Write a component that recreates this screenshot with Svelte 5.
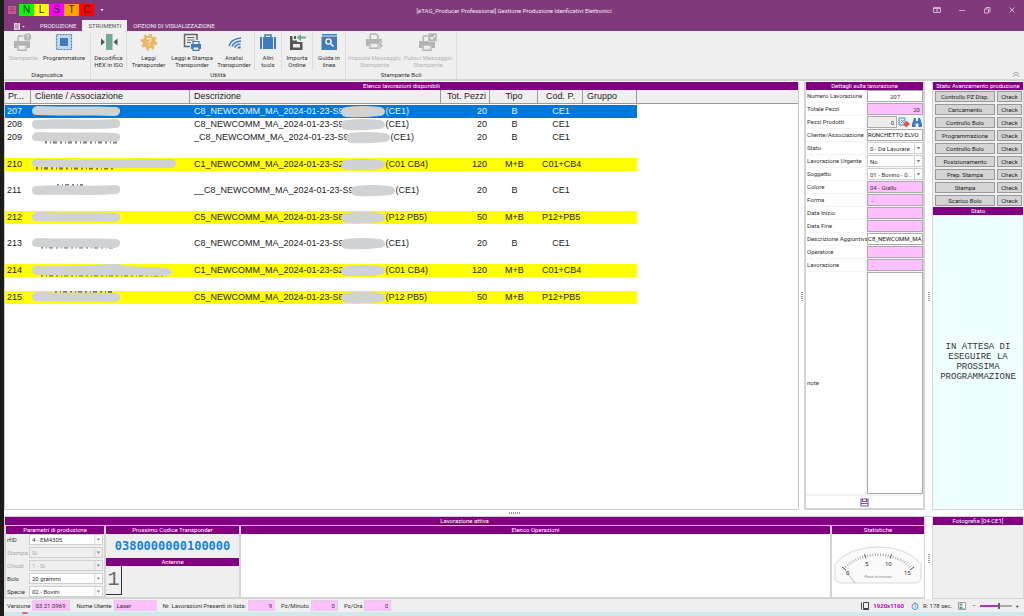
<script>
  const letters = ['N', 'L', 'S', 'T', 'C'];
  const groups = [
    { name: 'Diagnostica', cls: 'diag', items: [
      { icon: 'printer-help', lines: ['Stampante'], off: true },
      { icon: 'chip', lines: ['Programmatore'] }
    ] },
    { name: 'Utilità', cls: 'util', items: [
      { icon: 'decode', lines: ['Decodifica', 'HEX in ISO'], sep: true },
      { icon: 'gear', lines: ['Leggi', 'Transponder'] },
      { icon: 'doc-print', lines: ['Leggi e Stampa', 'Transponder'] },
      { icon: 'signal', lines: ['Analisi', 'Transponder'], sep: true },
      { icon: 'case', lines: ['Altri', 'tools'], sep: true },
      { icon: 'import', lines: ['Importa', 'Ordine'], sep: true },
      { icon: 'guide', lines: ['Guida in', 'linea'] }
    ] },
    { name: 'Stampante Boli', cls: 'boli', items: [
      { icon: 'printer-bolt', lines: ['Imposta Messaggio', 'Stampante'], off: true },
      { icon: 'printer-check', lines: ['Pulisci Messaggio', 'Stampante'], off: true }
    ] }
  ];
  const short = 'M6 2 C30 0 60 3 85 1 Q90 2 89 6 Q89 10 84 10 C60 12 30 10 6 11 Q1 11 1 6 Q1 2 6 2Z';
  const flat = 'M6 1 C30 2 60 1 85 2 Q90 3 89 7 Q88 11 83 11 C60 10 30 11 6 10 Q1 10 1 6 Q1 2 6 1Z';
  const long = 'M6 1 C50 2 90 2 140 1 Q145 1 145 6 Q145 10 139 10 C90 10 50 10 6 9 Q1 9 1 5 Q1 1 6 1Z';
  const hump = 'M6 2 C40 3 70 0 88 0 C98 4 120 2 136 4 Q141 5 141 8 Q140 12 135 12 C90 11 50 12 6 11 Q1 10 1 6 Q1 2 6 2Z';
  const rows = [
    { n: 207, blob: flat, d: 'C8_NEWCOMM_MA_2024-01-23-S9_', s: '(CE1)', q: 20, t: 'B', c: 'CE1', kind: 'sel' },
    { n: 208, blob: short, d: 'C8_NEWCOMM_MA_2024-01-23-S9_', s: '(CE1)', q: 20, t: 'B', c: 'CE1' },
    { n: 209, blob: flat, rest: 'M14 11 H86', d: '_C8_NEWCOMM_MA_2024-01-23-S9_', s: '(CE1)', q: 20, t: 'B', c: 'CE1' },
    { gap: 'tall' },
    { n: 210, blob: long, rest: 'M5 10 H83', d: 'C1_NEWCOMM_MA_2024-01-23-S2_', s: '(C01 CB4)', q: 120, t: 'M+B', c: 'C01+CB4', kind: 'hot' },
    { gap: 'low' },
    { n: 211, blob: short, rest: 'M26 1 H52', d: '__C8_NEWCOMM_MA_2024-01-23-S9_', s: '(CE1)', q: 20, t: 'B', c: 'CE1' },
    { gap: 'tall' },
    { n: 212, blob: flat, d: 'C5_NEWCOMM_MA_2024-01-23-S6_', s: '(P12 PB5)', q: 50, t: 'M+B', c: 'P12+PB5', kind: 'hot' },
    { gap: 'low' },
    { n: 213, blob: flat, rest: 'M10 10 H84', d: 'C8_NEWCOMM_MA_2024-01-23-S9_', s: '(CE1)', q: 20, t: 'B', c: 'CE1' },
    { gap: 'tall' },
    { n: 214, blob: hump, rest: 'M10 11 H134', d: 'C1_NEWCOMM_MA_2024-01-23-S2_', s: '(C01 CB4)', q: 120, t: 'M+B', c: 'C01+CB4', kind: 'hot' },
    { gap: 'tall' },
    { n: 215, blob: flat, rest: 'M24 1.500 H84', d: 'C5_NEWCOMM_MA_2024-01-23-S6_', s: '(P12 PB5)', q: 50, t: 'M+B', c: 'P12+PB5', kind: 'hot' }
  ];
  const details = [
    { id: 'num', l: 'Numero Lavorazione', v: '207', cls: 'mid' },
    { id: 'tot', l: 'Totale Pezzi', v: '20', cls: 'pink right' },
    { id: 'prod', l: 'Pezzi Prodotti', v: '0', cls: 'grey right', tools: true },
    { id: 'cli', l: 'Cliente/Associazione', v: 'RONCHETTO ELVO', cls: 'dark' },
    { id: 'stato', l: 'Stato', v: '0 - Da Lavorare', sel: true },
    { id: 'urg', l: 'Lavorazione Urgente', v: 'No', sel: true },
    { id: 'sog', l: 'Soggetto', v: '01 - Bovino - 0...', sel: true },
    { id: 'col', l: 'Colore', v: '04 - Giallo', cls: 'pink' },
    { id: 'forma', l: 'Forma', v: ' -', cls: 'pink' },
    { id: 'ini', l: 'Data Inizio', v: '', cls: 'pink' },
    { id: 'fine', l: 'Data Fine', v: '', cls: 'pink' },
    { id: 'agg', l: 'Descrizione Aggiuntiva', v: 'C8_NEWCOMM_MA_2024', cls: 'dark' },
    { id: 'op', l: 'Operatore', v: '', cls: 'pink' },
    { id: 'lav', l: 'Lavorazione', v: ' -', cls: 'pink' }
  ];
  const steps = ['Controllo PZ Disp.', 'Caricamento', 'Controllo Bolo', 'Programmazione', 'Controllo Bolo', 'Posizionamento', 'Prep. Stampa', 'Stampa', 'Scarico Bolo'];
  const params = [
    { id: 'rfid', l: 'rfID', v: '4 - EM4305' },
    { id: 'stampa', l: 'Stampa', v: 'Sì', off: true },
    { id: 'chiudi', l: 'Chiudi', v: '1 - Sì', off: true },
    { id: 'bolo', l: 'Bolo', v: '20 grammi' },
    { id: 'specie', l: 'Specie', v: '02 - Bovini' }
  ];
  const ticks = Array.from({ length: 31 }, (_, i) => {
    const a = ((-50 + (i * 100) / 30) * Math.PI) / 180;
    const major = i % 10 === 0;
    const r1 = major ? 42 : 43;
    const r2 = major ? 47 : 46;
    return { x1: 45 + r1 * Math.sin(a), y1: 51 - r1 * Math.cos(a) * 0.86, x2: 45 + r2 * Math.sin(a), y2: 51 - r2 * Math.cos(a) * 0.86, major };
  });
</script>

{#snippet printer()}
  <path d="M4 1h6l2 2v4" fill="none" stroke="currentColor" stroke-width="1.5" />
  <path d="M4.2 7V1.5" stroke="currentColor" stroke-width="1.5" />
  <path d="M0 6h16v7h-3v-3H3v3H0z" fill="currentColor" />
  <rect x="4" y="10" width="8" height="5.2" fill="#efefef" stroke="currentColor" stroke-width="1.5" />
{/snippet}

{#snippet icon(name)}
  <svg class="ico" viewBox="0 0 18 18" aria-hidden="true">
    {#if name === 'printer-help'}
      <g transform="translate(0 2)">{@render printer()}</g>
      <circle cx="13.5" cy="4" r="4.4" fill="#efefef" /><circle cx="13.5" cy="4" r="3.7" fill="currentColor" />
      <path d="M12.3 3.3q0-1.3 1.2-1.3t1.2 1.1q0 .7-1.1 1.3v.6M13.6 5.7v.7" fill="none" stroke="#efefef" stroke-width=".9" />
    {:else if name === 'chip'}
      <rect x="1.500" y="1.500" width="15" height="15" fill="#c5d8ec" stroke="#4a80b8" stroke-width="1.200" stroke-dasharray="2 1" />
      <rect x="5" y="5" width="8" height="8" fill="#3f7cbc" />
    {:else if name === 'decode'}
      <rect x="6" y="1" width="6.5" height="16" fill="#6fa894" />
      <path d="M1 5.5l4 3.5-4 3.5zM17.5 5.5l-4 3.5 4 3.5z" fill="#555" />
    {:else if name === 'gear'}
      <circle cx="9" cy="9" r="5" fill="none" stroke="#e9b765" stroke-width="3" />
      <circle cx="9" cy="9" r="7" fill="none" stroke="#e9b765" stroke-width="2.6" stroke-dasharray="2.7 2.8" />
      <circle cx="9" cy="9" r="4" fill="#e9b765" /><path d="M7.5 7q0-1.8 1.6-1.8T10.8 7q0 1-1.6 2.2v1M9.2 11.3v1.2" fill="none" stroke="#fff6e6" stroke-width="1.1" />
    {:else if name === 'doc-print'}
      <path d="M14 7V1.5H1.5v12H7" fill="none" stroke="#666" stroke-width="1.5" />
      <path d="M4 4.5h7.5M4 7h7.5M4 9.500h4" stroke="#666" stroke-width="1.2" />
      <path d="M8 11h10v5H8z" fill="#3f7cbc" /><path d="M10 11V8.500h6V11M10 14h6v3.300h-6z" fill="#efefef" stroke="#3f7cbc" stroke-width="1.2" />
    {:else if name === 'signal'}
      <path d="M4 13Q6 6 16 5M7 13.500Q8.500 9 16 8M9.500 14.500Q11 11.500 15.500 11" fill="none" stroke="#3f7cbc" stroke-width="1.600" /><path d="M12 15.500q1-2.500 3.500-2.500v2.500z" fill="#3f7cbc" />
    {:else if name === 'case'}
      <path d="M6 4V2h6v2" fill="none" stroke="#3f7cbc" stroke-width="1.500" />
      <path d="M1 4h2v12H1zM4 4h10v12H4zM15 4h2v12h-2z" fill="#3f7cbc" />
    {:else if name === 'import'}
      <path d="M2 3h2.500v4.500H9V9h5.500v8H2z" fill="#555" /><rect x="5" y="11" width="7" height="3.500" fill="#efefef" /><path d="M6 3v3h2V3z" fill="#555" />
      <path d="M18 4.500h-6" stroke="#6fa894" stroke-width="2" /><path d="M8.500 4.500l4.500-3.500v7z" fill="#6fa894" />
    {:else if name === 'guide'}
      <path d="M2 1h15v1.500H2zM1.500 3.500H17V17H1.500z" fill="#3f7cbc" />
      <circle cx="8.500" cy="8.500" r="2.600" fill="none" stroke="#fff" stroke-width="1.300" /><path d="M10.500 10.500l3 3" stroke="#fff" stroke-width="1.500" />
    {:else if name === 'printer-bolt'}
      {@render printer()}
      <path d="M15 8l-4 5h3l-2 5 6-6h-3l2-4z" fill="currentColor" stroke="#efefef" stroke-width=".6" />
    {:else if name === 'printer-check'}
      <g transform="translate(0 2)">{@render printer()}</g>
      <rect x="9" y="0" width="9" height="8.500" fill="currentColor" stroke="#efefef" stroke-width=".6" /><path d="M11 4l2 2 3.500-4" fill="none" stroke="#efefef" stroke-width="1.200" />
    {/if}
  </svg>
{/snippet}

{#snippet drop(id, value, off)}
  <span class="drop" class:off>
    <select {id} disabled={off}><option>{value}</option></select>
    <svg viewBox="0 0 8 10" aria-hidden="true"><path d="M.5 0v10" stroke="#cfcfcf" /><path d="M2.500 4h4L4.500 6.500z" fill="#888" /></svg>
  </span>
{/snippet}

<div class="screen">
  <div class="window">
    <header class="titlebar">
      <div class="quick">
        <svg class="logo" viewBox="0 0 8 8" aria-hidden="true"><path d="M0 0h8v8H0z" fill="#c5588f" /><path d="M1 4.500h6M2 2h4" stroke="#8d3a7c" stroke-width="1.200" /></svg>
        <div class="letters">{#each letters as l}<button class="lt {l}">{l}</button>{/each}</div>
        <svg class="more" viewBox="0 0 4 4" aria-hidden="true"><path d="M.5 1h3L2 3.500z" fill="#f2e6f1" /></svg>
      </div>
      <h1>[eTAG_Producer Professional] Gestione Produzione Idenficativi Elettronici</h1>
      <div class="winbtns">
        <button aria-label="Barra multifunzione"><svg viewBox="0 0 8 8"><path d="M.5 1.500h7v5h-7zM.5 2.500h7M4 6V3.500M3 4.500l1-1 1 1" /></svg></button>
        <button aria-label="Riduci"><svg viewBox="0 0 8 8"><path d="M1 4.500h6" /></svg></button>
        <button aria-label="Ripristina"><svg viewBox="0 0 8 8"><path d="M1.500 3h4v4h-4zM3 3V1.500h4v4H5.500" /></svg></button>
        <button aria-label="Chiudi finestra"><svg viewBox="0 0 8 8"><path d="M1.500 1.500l5 5M6.500 1.500l-5 5" /></svg></button>
      </div>
    </header>

    <nav class="tabs">
      <button class="file" aria-label="File"><svg viewBox="0 0 12 8"><path d="M0 0h6v7H0z" fill="#e6d6e5" /><path d="M1 2h2M1 3.500h2M1 5h2M4 0v7" stroke="#80397b" stroke-width=".6" /><path d="M8 3h3L9.500 4.500z" fill="#e6d6e5" /></svg></button>
      <button>PRODUZIONE</button>
      <button class="active">STRUMENTI</button>
      <button>OPZIONI DI VISUALIZZAZIONE</button>
    </nav>

    <section class="ribbon">
      {#each groups as g}
        <div class="group">
          <div class="items {g.cls}">
            {#each g.items as it}
              <button class="tool" class:sep={it.sep} disabled={it.off}>
                {@render icon(it.icon)}
                {#each it.lines as line}<span>{line}</span>{/each}
              </button>
            {/each}
          </div>
          <div class="gname">{g.name}</div>
        </div>
      {/each}
      <button class="collapse" aria-label="Comprimi"><svg viewBox="0 0 8 6"><path d="M1 3l3-2 3 2M1 5.500l3-2 3 2" fill="none" stroke="#888" stroke-width=".8" /></svg></button>
    </section>

    <main>
      <section class="list">
        <h2>Elenco lavorazioni disponibili</h2>
        <table>
          <colgroup><col class="c1" /><col class="c2" /><col class="c3" /><col class="c4" /><col class="c5" /><col class="c6" /><col class="c7" /><col /></colgroup>
          <thead>
            <tr><th>Pr...</th><th>Cliente / Associazione</th><th>Descrizione</th><th class="r">Tot. Pezzi</th><th class="c">Tipo</th><th class="c">Cod. P.</th><th>Gruppo</th><th class="end"></th></tr>
          </thead>
          <tbody>
            {#each rows as r}
              {#if r.gap}
                <tr class={r.gap}><td colspan="8"></td></tr>
              {:else}
                <tr class={r.kind}>
                  <td>{r.n}</td>
                  <td class="hid"><svg class="blob" viewBox="0 0 150 13" aria-hidden="true">
                    {#if r.rest}<path d={r.rest} stroke="#444" stroke-width="3" stroke-dasharray="2 3 1 2 4 3" opacity=".7" />{/if}
                    <path d={r.blob} fill="#d0d2d4" /></svg></td>
                  <td class="desc">{r.d}<svg class="mask" viewBox="0 0 46 13" aria-hidden="true"><path d="M6 2 Q22 0 40 2 Q45 3 45 7 Q44 11 39 11 Q22 13 6 12 Q1 11 1 7 Q1 3 6 2Z" fill="#d0d2d4" /></svg>{r.s}</td>
                  <td class="r">{r.q}</td><td class="c">{r.t}</td><td class="c">{r.c}</td><td></td><td class="end"></td>
                </tr>
              {/if}
            {/each}
          </tbody>
        </table>
      </section>

      <div class="split v"><i></i></div>

      <section class="details">
        <h2>Dettagli sulla lavorazione</h2>
        {#each details as d}
          <div class="row">
            <label for={d.id}>{d.l}</label>
            {#if d.sel}
              {@render drop(d.id, d.v, false)}
            {:else if d.tools}
              <span class="combo">
                <input id={d.id} class={d.cls} value={d.v} readonly />
                <button aria-label="Azzera"><svg viewBox="0 0 12 11"><path d="M1 1h6v7H1z" fill="#e8f0fa" stroke="#4a86c8" /><path d="M3 3l3 3M6 3L3 6" stroke="#4a86c8" stroke-width=".8" /><path d="M5 7l4-3 3 3-4 3.500z" fill="#df5a3a" /></svg></button>
                <button aria-label="Cerca"><svg viewBox="0 0 12 11"><path d="M3 1h2v3h2V1h2L11 7v3H7.500V6.500h-3V10H1V7z" fill="#3f7cbc" /></svg></button>
              </span>
            {:else}
              <input id={d.id} class={d.cls} value={d.v} readonly />
            {/if}
          </div>
        {/each}
        <div class="row note">
          <label for="note">note</label>
          <textarea id="note"></textarea>
        </div>
        <button class="save" aria-label="Salva"><svg viewBox="0 0 9 9"><path d="M1 1h7v7H1zM2.500 1v2.500h4V1M1 5.500h7" fill="none" stroke="#7b4fa8" stroke-width="1.100" /></svg></button>
      </section>

      <div class="split v"><i></i></div>

      <section class="progress">
        <h2>Stato Avanzamento produzione</h2>
        <div class="steps">
          {#each steps as s}<button>{s}</button><button>Check</button>{/each}
        </div>
        <h2>Stato</h2>
        <div class="wait"><p>IN ATTESA DI ESEGUIRE LA PROSSIMA PROGRAMMAZIONE</p></div>
      </section>
    </main>

    <div class="split h"><i></i></div>

    <section class="bottom">
      <div class="active-job">
        <h2>Lavorazione attiva</h2>
        <div class="panes">
          <div class="pane">
            <h2>Parametri di produzione</h2>
            <div class="params">
              {#each params as p}
                <label for={p.id} class:off={p.off}>{p.l}</label>
                {@render drop(p.id, p.v, p.off)}
              {/each}
            </div>
          </div>
          <div class="pane">
            <h2>Prossimo Codice Transponder</h2>
            <div class="code">0380000000100000</div>
            <h2>Antenne</h2>
            <button class="ant">1</button>
          </div>
          <div class="pane white"><h2>Elenco Operazioni</h2></div>
          <div class="pane white">
            <h2>Statistiche</h2>
            <svg class="gauge" viewBox="0 0 90 46" aria-hidden="true">
              <path d="M2 22Q16 5 45 5T88 22V36q-1 5-7 5H9q-6 0-7-5z" fill="#fafafa" stroke="#d9d9d9" />
              {#each ticks as t}<line x1={t.x1} y1={t.y1} x2={t.x2} y2={t.y2} stroke={t.major ? '#444' : '#888'} stroke-width={t.major ? 1 : 0.7} />{/each}
              <path d="M12 28l10 13" stroke="#888" stroke-width=".6" />
              <g class="nums"><text x="13" y="33">0</text><text x="32" y="24">5</text><text x="52" y="24">10</text><text x="71" y="33">15</text></g>
              <text class="cap" x="45" y="36">Pezzi al minuto</text>
            </svg>
          </div>
        </div>
      </div>
      <div class="split v"><i></i></div>
      <div class="photo"><h2>Fotografia [04-CE1]</h2></div>
    </section>

    <footer>
      <label for="ver">Versione</label><input id="ver" class="w1" value="03.21.0969" readonly />
      <label for="usr">Nome Utente</label><input id="usr" class="w2" value="Laser" readonly />
      <label for="nr">Nr. Lavorazioni Presenti in lista:</label><input id="nr" class="w3 right" value="9" readonly />
      <label for="pm">Pz/Minuto</label><input id="pm" class="w3 right" value="0" readonly />
      <label for="po">Pz/Ora</label><input id="po" class="w3 right" value="0" readonly />
      <div class="info">
        <svg class="s8" viewBox="0 0 8 8" aria-hidden="true"><path d="M2.500.500h5v6h-5zM.5.500v7M2 7.500h6" fill="none" stroke="#444" /></svg>
        <b>1920x1160</b>
        <svg class="s8" viewBox="0 0 8 8" aria-hidden="true"><circle cx="4" cy="4.500" r="3" fill="none" stroke="#5b8fc9" /><path d="M4 0v2M4 2.800V4.500l1.500 1" fill="none" stroke="#5b8fc9" stroke-width=".8" /></svg>
        <span>R: 178 sec.</span>
        <svg class="s8 pic" viewBox="0 0 8 8" aria-hidden="true"><path d="M.5.500h7v7h-7z" fill="#fff" stroke="#888" stroke-width=".8" /><path d="M1.500 1.500h3v2h-3zM1.500 4.500h3v2.500h-3zM5.500 6h1v1h-1z" fill="#5d9c84" /></svg>
        <span class="minus">−</span><input class="zoom" type="range" aria-label="Zoom" value="60" /><span>+</span>
      </div>
    </footer>
    <div class="desk"><i></i></div>
  </div>
</div>

<style>
  :global(body) { background: #1d1b1b; }
  .screen { min-height: 100vh; padding-left: 4px; box-sizing: border-box; display: flex; font: 6px/7px Roboto, sans-serif; color: #333; }
  .screen :is(button, input, select, textarea) { font: inherit; color: inherit; margin: 0; padding: 0; border: 0; background: none; border-radius: 0; box-sizing: border-box; min-width: 0; }
  .window { flex: 1; min-width: 0; display: flex; flex-direction: column; background: #fff; }
  h1, h2 { margin: 0; font: inherit; }
  h2 { background: #800080; color: #fff; text-align: center; height: 8px; line-height: 8px; flex: none; overflow: hidden; white-space: nowrap; }

  .titlebar { height: 20px; background: #80397b; color: #f4eaf4; display: grid; grid-template-columns: 1fr auto 1fr; align-items: center; }
  .quick { display: flex; align-items: center; gap: 4px; padding-left: 4px; }
  .logo { width: 8px; height: 8px; }
  .letters { display: flex; margin-left: -1px; }
  .screen .lt { width: 15px; height: 12px; font: 10px/12px "Liberation Sans", sans-serif; color: #222; }
  .screen .N { background: #0f0; } .screen .L { background: #ff0; } .screen .S { background: #f0f; } .screen .T { background: #ffa500; } .screen .C { background: #f00; }
  .more { width: 4px; height: 4px; margin-left: 2px; }
  .winbtns { display: flex; justify-content: flex-end; gap: 17px; padding-right: 8px; }
  .winbtns button { width: 8px; height: 8px; display: flex; }
  .winbtns path { fill: none; stroke: #cdb2cb; stroke-width: 1; }

  .tabs { height: 11px; background: #80397b; color: #f4eaf4; display: flex; padding-left: 9px; }
  .tabs button { padding: 0 6px; line-height: 12px; }
  .tabs .file { width: 21px; padding: 2px 0 0 1px; }
  .file svg { width: 12px; height: 8px; display: block; }
  .tabs .active { background: #efefef; color: #555; }

  .ribbon { height: 50px; background: #efefef; border-bottom: 2px solid #d4d4d4; display: flex; box-sizing: border-box; }
  .group { border-right: 1px solid #dcdcdc; margin: 2px 0 0; display: flex; flex-direction: column; }
  .items { display: grid; flex: 1; }
  .diag { grid-template-columns: 38px 44px; padding-right: 4px; }
  .util { grid-template-columns: 36px 43px 44px 41px 27px 31px 32px; }
  .boli { grid-template-columns: 57px 50px; padding-right: 3px; }
  .tool { display: flex; flex-direction: column; align-items: center; justify-content: flex-start; white-space: nowrap; }
  .screen .tool:disabled { color: #b4b4b4; }
  .screen .tool.sep { border-right: 1px solid #dcdcdc; }
  .ico { width: 18px; height: 18px; margin-bottom: 3px; flex: none; }
  .gname { text-align: center; height: 9px; line-height: 9px; }
  .screen .collapse { margin: auto 4px 2px auto; width: 8px; height: 6px; display: flex; }

  main { flex: 1; display: grid; grid-template-columns: 1fr 5px 121px 7px 92px; background: #fff; padding-top: 1px; }
  .list { border: 1px solid #ccc; border-top: 0; min-width: 0; }
  table { width: 100%; table-layout: fixed; border-collapse: separate; border-spacing: 0; font: 9px/13px "Liberation Sans", Arial, sans-serif; color: #222; }
  .c1 { width: 26px; } .c2 { width: 159px; } .c3 { width: 251px; } .c4 { width: 49px; } .c5 { width: 48px; } .c6 { width: 45px; } .c7 { width: 54px; }
  th { height: 14px; font-weight: normal; text-align: left; background: #efefef; border-right: 1px solid #999; border-bottom: 1px solid #999; padding: 0 3px 0 4px; white-space: nowrap; box-sizing: border-box; }
  th:first-child { padding: 0 0 0 3px; }
  th.end { border-right: 0; }
  tbody::before { content: ""; display: block; height: 1px; }
  td { height: 13px; padding: 0 3px 0 4px; white-space: nowrap; box-sizing: border-box; overflow: visible; }
  td:first-child { padding: 0 0 0 2px; }
  td.end { padding: 0; }
  .r { text-align: right; } .c { text-align: center; }
  .tall td { height: 14px; } .low td { height: 13px; }
  .sel td:not(.end) { background: #0078d7; color: #e6f2fc; }
  .hot td:not(.end) { background: #ff0; }
  td.hid { padding: 0; }
  .blob { width: 150px; height: 13px; display: block; }
  .mask { width: 46px; height: 13px; margin-left: -9px; vertical-align: top; }

  .split { display: flex; align-items: center; justify-content: center; }
  .split i { width: 2px; height: 9px; background: repeating-linear-gradient(#999 0 1px, #fff 1px 2px); }
  .split.h { height: 6px; }
  .split.h i { width: 11px; height: 2px; background: repeating-linear-gradient(90deg, #999 0 1px, #fff 1px 2px); }

  .details { border: 2px solid #d4d4d4; border-top: 0; display: flex; flex-direction: column; background: #f4f4f4; min-width: 0; }
  .row { display: grid; grid-template-columns: 61px 1fr; height: 13px; flex: none; }
  .row label { background: #fff; margin: 0 2px 1px 0; padding-left: 1px; line-height: 12px; white-space: nowrap; overflow: hidden; }
  .row label[for="agg"] { margin-right: 0; }
  .row > input, .combo input, .row textarea { width: 100%; height: 12px; border: 1px solid #aaa; background: #fff; padding: 0 2px; }
  .row .pink { background: #ffc0ff; }
  .row .grey { background: #ededed; }
  .right { text-align: right; } .mid { text-align: center; }
  .row .dark { color: #111; padding: 0 0 2px; }
  .row .drop { height: 12px; }
  .combo { display: grid; grid-template-columns: 1fr 12px 12px; gap: 1px; }
  .combo button { display: flex; align-items: center; }
  .combo svg { width: 12px; height: 11px; }
  .row.note { flex: 1; height: auto; }
  .note label { display: flex; align-items: center; }
  .row textarea { height: calc(100% - 1px); resize: none; display: block; }
  .screen .save { height: 12px; margin-top: 1px; background: #fff; display: flex; align-items: center; justify-content: center; }
  .save svg { width: 9px; height: 9px; }

  .drop { display: flex; position: relative; border: 1px solid #cfcfcf; background: #fff; min-width: 0; box-sizing: border-box; }
  .drop select { appearance: none; width: 100%; padding: 0 8px 0 2px; }
  .drop svg { position: absolute; right: 0; top: 0; width: 8px; height: 100%; pointer-events: none; }
  .off, .off select { color: #aaa; opacity: 1; }
  .drop.off { background: #efefef; }

  .progress { display: flex; flex-direction: column; border: 1px solid #d4d4d4; border-top: 0; background: #efefef; }
  .steps { display: grid; grid-template-columns: 1fr 25px; gap: 2px; padding: 1px 1px 1px 2px; }
  .steps button { height: 11px; border: 1px solid #999; background: #d4d4d4; color: #222; white-space: nowrap; }
  .wait { flex: 1; background: #efffff; display: flex; align-items: center; justify-content: center; text-align: center; font: 9px/10px "Liberation Mono", monospace; }
  .wait p { margin: 0; }

  .bottom { display: grid; grid-template-columns: 1fr 7px 92px; height: 83px; border-top: 1px solid #d4d4d4; box-sizing: border-box; }
  .active-job { display: flex; flex-direction: column; background: #d4d4d4; padding: 0 1px; min-width: 0; }
  .panes { flex: 1; display: grid; grid-template-columns: 98px 133px 1fr 92px; gap: 2px; padding: 1px 0 2px 1px; }
  .pane { background: #efefef; display: flex; flex-direction: column; min-width: 0; }
  .white { background: #fff; }
  .params { display: grid; grid-template-columns: 22px 1fr; grid-auto-rows: 11px; row-gap: 2px; padding: 0 1px; }
  .params label { line-height: 11px; white-space: nowrap; }
  .code { flex: none; height: 24px; text-align: center; font: bold 12px/24px "DejaVu Sans Mono", monospace; color: #1482dc; }
  .screen .ant { width: 16px; height: 29px; border-right: 1px solid #333; border-bottom: 1px solid #333; font: 20px/28px "Liberation Mono", monospace; color: #666; }
  .gauge { width: 90px; height: 46px; margin: 8px auto auto; }
  .nums text { font-size: 6px; fill: #333; } .cap { font-size: 4px; fill: #888; text-anchor: middle; }
  .photo { background: #efefef; border: 1px solid #d4d4d4; border-top: 0; }

  footer { height: 13px; background: #efefef; display: flex; align-items: center; padding: 0 5px 0 3px; white-space: nowrap; }
  footer label { margin-right: 2px; }
  .screen footer > input { height: 11px; background: #ffc0ff; border: 1px solid #e3cbe3; padding: 0 2px; margin-right: 6px; }
  .w1 { width: 38px; } .w2 { width: 43px; } .w3 { width: 27px; }
  .info { margin-left: auto; display: flex; align-items: center; gap: 4px; }
  .info b { color: #c000c0; margin-right: 3px; }
  .s8 { width: 8px; height: 8px; }
  .pic { margin-left: 2px; }
  .minus { margin-left: 2px; }
  .screen .zoom { appearance: none; width: 32px; height: 8px; background: linear-gradient(90deg, #a335c8 0 60%, #aaa 60%) center / 100% 2px no-repeat; }
  .zoom::-webkit-slider-thumb { appearance: none; width: 2px; height: 6px; background: #666; }
  .desk { height: 4px; background: #cfe8ec; padding-left: 18px; }
  .desk i { display: block; width: 6px; height: 2px; background: #d66; border-radius: 3px 3px 0 0; }
</style>
